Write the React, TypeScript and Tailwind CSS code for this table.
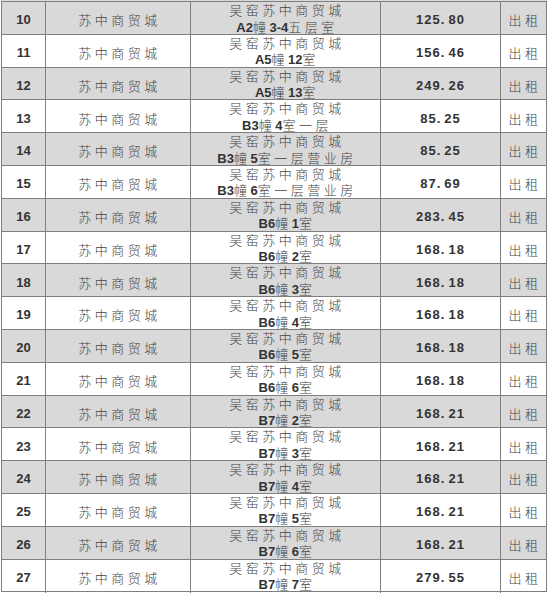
import React from "react"

// 出租房源清单（第10-27项）
interface Fangyuan {
  xuhao: number
  dong: string
  shi: string
  mianji: string
}

const rows: Fangyuan[] = [
  { xuhao: 10, dong: "A2", shi: "幢3-4五层室", mianji: "125.80" },
  { xuhao: 11, dong: "A5", shi: "幢12室", mianji: "156.46" },
  { xuhao: 12, dong: "A5", shi: "幢13室", mianji: "249.26" },
  { xuhao: 13, dong: "B3", shi: "幢4室一层", mianji: "85.25" },
  { xuhao: 14, dong: "B3", shi: "幢5室一层营业房", mianji: "85.25" },
  { xuhao: 15, dong: "B3", shi: "幢6室一层营业房", mianji: "87.69" },
  { xuhao: 16, dong: "B6", shi: "幢1室", mianji: "283.45" },
  { xuhao: 17, dong: "B6", shi: "幢2室", mianji: "168.18" },
  { xuhao: 18, dong: "B6", shi: "幢3室", mianji: "168.18" },
  { xuhao: 19, dong: "B6", shi: "幢4室", mianji: "168.18" },
  { xuhao: 20, dong: "B6", shi: "幢5室", mianji: "168.18" },
  { xuhao: 21, dong: "B6", shi: "幢6室", mianji: "168.18" },
  { xuhao: 22, dong: "B7", shi: "幢2室", mianji: "168.21" },
  { xuhao: 23, dong: "B7", shi: "幢3室", mianji: "168.21" },
  { xuhao: 24, dong: "B7", shi: "幢4室", mianji: "168.21" },
  { xuhao: 25, dong: "B7", shi: "幢5室", mianji: "168.21" },
  { xuhao: 26, dong: "B7", shi: "幢6室", mianji: "168.21" },
  { xuhao: 27, dong: "B7", shi: "幢7室", mianji: "279.55" },
]

const cjk = "font-['Noto_Sans_CJK_SC',sans-serif] font-light text-[#444] tracking-[3.5px]"
const latin = "font-['Liberation_Sans',Arial,sans-serif] font-bold text-[#333]"

// 把 "幢6室..." 里的数字、字母单独加粗
function Shi({ text }: { text: string }) {
  const parts = text.split(/([0-9A-Z\-]+)/).filter(Boolean)
  return (
    <>
      {parts.map((p, i) =>
        /^[0-9A-Z\-]+$/.test(p) ? (
          <span key={i} className={latin}>{p}</span>
        ) : (
          <span key={i} className={cjk}>{p}</span>
        )
      )}
    </>
  )
}

function Mianji({ v }: { v: string }) {
  const [a, b] = v.split(".")
  return (
    <span className={`${latin} text-[13px] tracking-[1px]`}>
      {a}.<span className="ml-[3px]">{b}</span>
    </span>
  )
}

export default function App() {
  return (
    <div className="w-[549px] h-[593px] bg-white overflow-hidden">
      <div className="h-[1px] w-[546px] ml-[1px] bg-[#d9d9d9]" />
      <div className="ml-[1px] w-[546px] border-t border-l border-r border-[#7f7f7f]">
        {rows.map((r) => (
          <div
            key={r.xuhao}
            className={`grid grid-cols-[44px_145px_190px_120px_45px] h-[32.8px] border-b border-[#7f7f7f] ${
              r.xuhao % 2 === 0 ? "bg-[#d9d9d9]" : "bg-white"
            }`}
          >
            <div className="flex items-center justify-center pt-[2px] border-r border-[#7f7f7f]">
              <span className={`${latin} text-[13px]`}>{r.xuhao}</span>
            </div>
            <div className="flex items-center justify-center pt-[2px] pl-[3px] border-r border-[#7f7f7f]">
              <span className={`${cjk} text-[13px]`}>苏中商贸城</span>
            </div>
            <div className="flex flex-col items-center justify-center border-r border-[#7f7f7f] text-[13px] leading-[16.5px] pl-[3px]">
              <span className={cjk}>吴窑苏中商贸城</span>
              <span>
                <span className={latin}>{r.dong}</span>
                <Shi text={r.shi} />
              </span>
            </div>
            <div className="flex items-center justify-center pt-[2px] border-r border-[#7f7f7f]">
              <Mianji v={r.mianji} />
            </div>
            <div className="flex items-center justify-center pt-[2px] pl-[3px]">
              <span className={`${cjk} text-[13px]`}>出租</span>
            </div>
          </div>
        ))}
      </div>
    </div>
  )
}
